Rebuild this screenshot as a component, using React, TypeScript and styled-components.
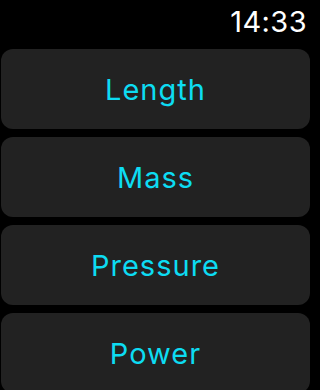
import React from 'react';
import styled, { createGlobalStyle } from 'styled-components';

const GlobalStyle = createGlobalStyle`
  html, body {
    margin: 0;
    padding: 0;
    background: #000;
  }
  body {
    font-family: Inter, Roboto, 'Noto Sans', sans-serif;
    overflow: hidden;
  }
`;

const categories = ['Length', 'Mass', 'Pressure', 'Power'];

const Screen = styled.div`
  width: 312px;
  height: 390px;
  background: #000;
  display: flex;
  flex-direction: column;
  overflow: hidden;
`;

const StatusBar = styled.div`
  height: 49px;
  flex-shrink: 0;
  display: flex;
  justify-content: flex-end;
  align-items: flex-start;
  padding: 5px 5px 0 0;
  box-sizing: border-box;
`;

const Clock = styled.span`
  color: #fff;
  font-size: 29px;
  line-height: 34px;
  font-weight: 400;
  letter-spacing: 0.4px;
`;

const List = styled.div`
  flex-shrink: 0;
  display: flex;
  flex-direction: column;
  gap: 8px;
  padding: 0 2px 0 1px;
`;

const CategoryButton = styled.button`
  height: 80px;
  flex-shrink: 0;
  border: none;
  border-radius: 12px;
  background: #222222;
  color: #0ddcf2;
  font-family: inherit;
  font-size: 29px;
  font-weight: 400;
  letter-spacing: 1px;
  display: flex;
  align-items: center;
  justify-content: center;
  padding: 0;
  cursor: pointer;
`;

const App = () => {
  return (
    <>
      <GlobalStyle />
      <Screen>
        <StatusBar>
          <Clock>14:33</Clock>
        </StatusBar>
        <List>
          {categories.map((name) => (
            <CategoryButton key={name}>{name}</CategoryButton>
          ))}
        </List>
      </Screen>
    </>
  );
};

export default App;
